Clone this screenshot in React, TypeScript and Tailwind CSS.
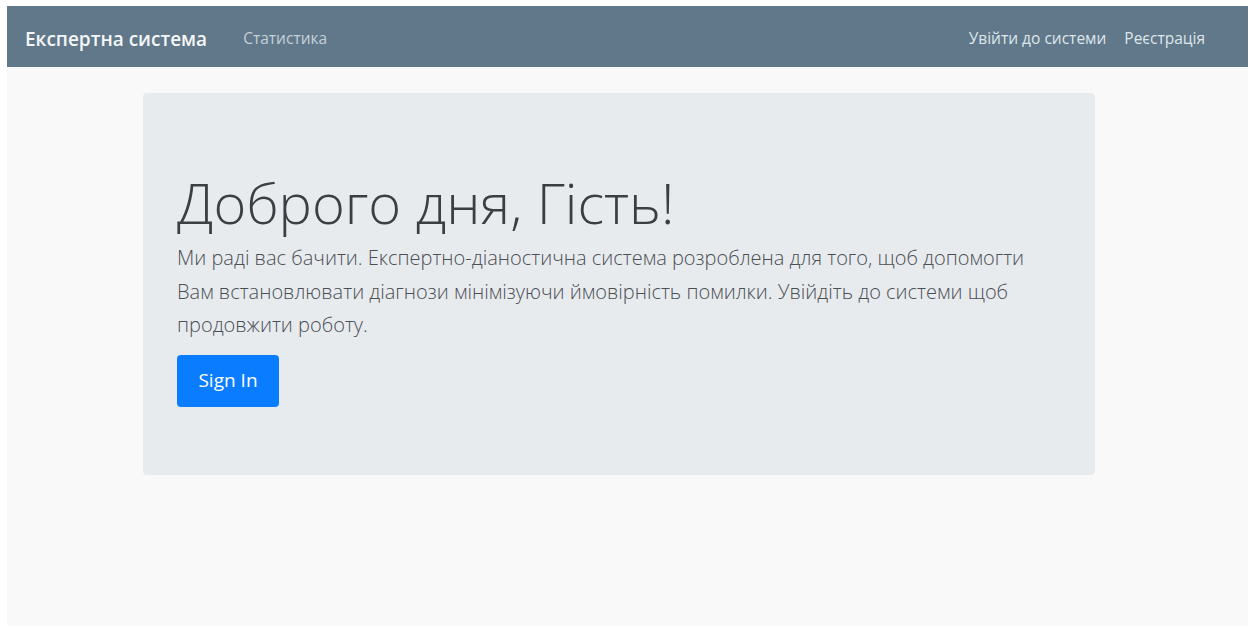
export default function App() {
  return (
    <div className="min-h-screen bg-white pt-[6px] pl-[7px] pr-[6px] pb-[1px] font-['Open_Sans','Noto_Sans',sans-serif]">
      <div className="flex h-[620px] flex-col bg-[#f9f9f9]">
        <nav className="flex h-[61px] items-center bg-[#607889] pl-[18px] pr-[43px] pt-[5px]">
          <a className="text-[19px] font-semibold text-[#f4f6f8]">Експертна система</a>
          <a className="ml-[36px] text-[15.5px] text-[#c5d0d8]">Статистика</a>
          <div className="ml-auto flex gap-[18px] text-[15.5px] text-[#dfe6eb]">
            <a>Увійти до системи</a>
            <a>Реєстрація</a>
          </div>
        </nav>

        <section className="ml-[136px] mt-[26px] h-[382px] w-[952px] rounded-[4px] bg-[#e8ebee] pl-[34px] pt-[76px]">
          <h1 className="text-[56px] font-light leading-[1.2] text-[#3b3f44]">Доброго дня, Гість!</h1>
          <p className="mt-[5px] text-[20px] font-light leading-[33.5px] text-[#4a4f55]">
            Ми раді вас бачити. Експертно-діаностична система розроблена для того, щоб допомогти
            <br />
            Вам встановлювати діагнози мінімізуючи ймовірність помилки. Увійдіть до системи щоб
            <br />
            продовжити роботу.
          </p>
          <button className="mt-[13px] h-[52px] w-[102px] rounded-[4px] bg-[#0a7cff] text-[19px] text-white">
            Sign In
          </button>
        </section>
      </div>
    </div>
  );
}
